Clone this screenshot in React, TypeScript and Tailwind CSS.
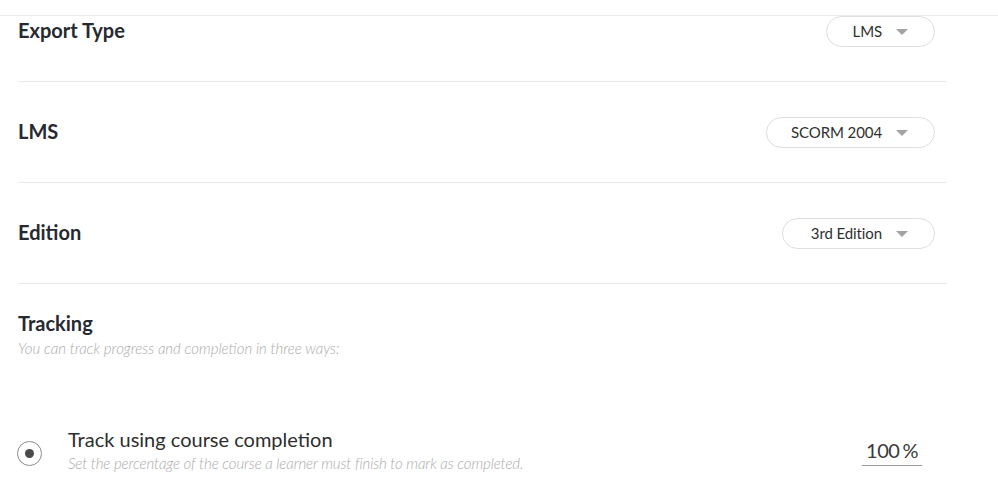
import React from 'react';

type Row = { label: string; value: string; width: string };

const rows: Row[] = [
  { label: 'Export Type', value: 'LMS', width: 'w-[109px]' },
  { label: 'LMS', value: 'SCORM 2004', width: 'w-[169px]' },
  { label: 'Edition', value: '3rd Edition', width: 'w-[153px]' },
];

const Caret = () => (
  <svg width="12" height="6" viewBox="0 0 12 6" className="shrink-0">
    <path d="M0 0 L12 0 L6 6 Z" fill="#a3a3a3" />
  </svg>
);

const Dropdown: React.FC<{ value: string; width: string }> = ({ value, width }) => (
  <div
    className={`${width} h-[31px] rounded-full border border-[#dedede] bg-white flex items-center justify-end gap-[14px] pr-[26px] text-[15px] text-[#2f2f2f]`}
  >
    <span className="tracking-[-0.1px]">{value}</span>
    <Caret />
  </div>
);

export default function App() {
  return (
    <div className="w-[998px] h-[490px] overflow-hidden bg-white font-['Lato','Noto_Sans',sans-serif] text-[#222]">
      <div className="h-[16px] border-b border-[#ececec]" />
      <div className="pl-[18px] pr-[51px]">
        {rows.map((row, i) => (
          <div
            key={row.label}
            className={`flex items-center justify-between border-b border-[#e9e9e9] pr-[12px] ${
              i === 0 ? 'pt-0 pb-[34px]' : 'pt-[35px] pb-[34px]'
            }`}
          >
            <h3 className="text-[20px] font-bold text-[#262a30] leading-none -mt-[3px]">{row.label}</h3>
            <Dropdown value={row.value} width={row.width} />
          </div>
        ))}

        <div className="pt-[27px]">
          <h3 className="text-[20px] font-bold text-[#262a30] leading-[24px]">Tracking</h3>
          <p className="mt-[4px] text-[15px] italic font-light text-[#ababab] leading-[18px]">
            You can track progress and completion in three ways:
          </p>
        </div>

        <div className="mt-[70px] flex items-center">
          <div className="w-[25px] h-[25px] rounded-full border border-[#8c8c8c] flex items-center justify-center -ml-[1px] mt-[8px]">
            <div className="w-[9px] h-[9px] rounded-full bg-[#4a4a4a]" />
          </div>
          <div className="ml-[26px] flex-1">
            <div className="text-[20px] text-[#2e2e2e] leading-[24px]">Track using course completion</div>
            <div className="text-[15px] italic font-light text-[#ababab] leading-[18px] mt-[3px] tracking-[-0.1px]">
              Set the percentage of the course a learner must finish to mark as completed.
            </div>
          </div>
          <div className="mr-[25px] w-[60px] border-b border-[#9a9a9a] pb-[3px] text-center text-[20px] text-[#3a3a3a] leading-[24px] mt-[4px] tracking-[-0.5px]">
            100<span className="ml-[3px]">%</span>
          </div>
        </div>
      </div>
    </div>
  );
}
